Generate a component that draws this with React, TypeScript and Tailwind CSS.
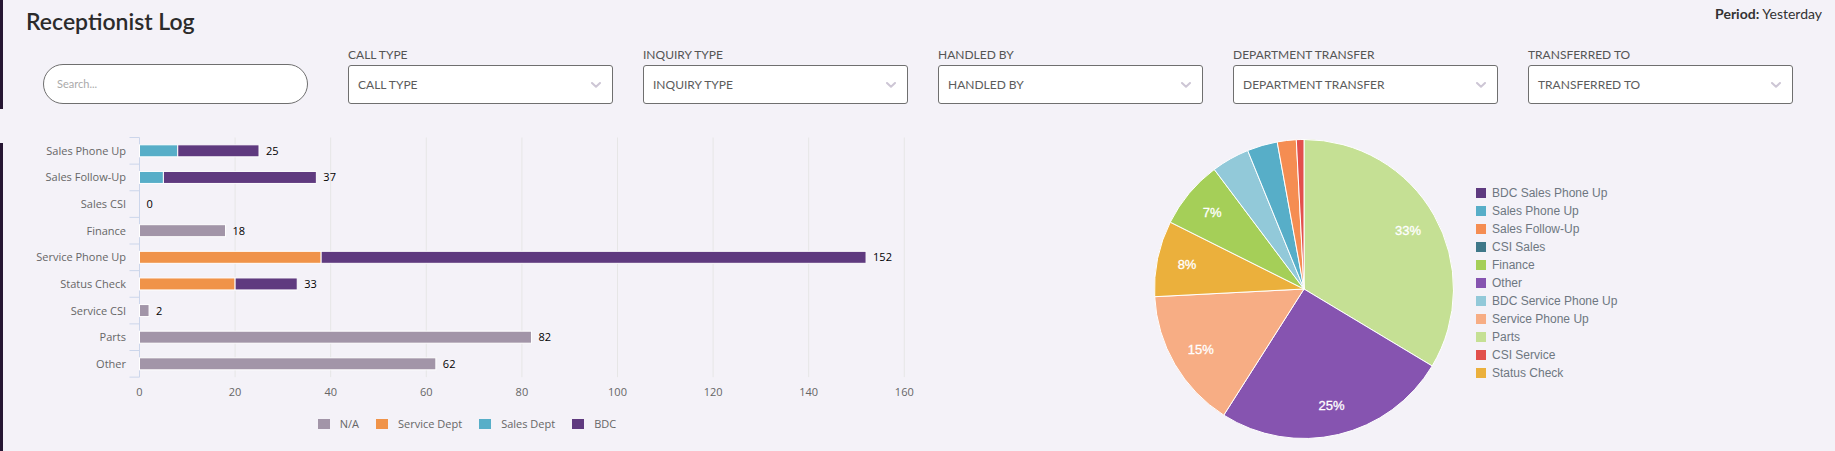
const colors = {
  na: '#a295a8',
  service: '#f09349',
  sales: '#57aec8',
  bdc: '#5f3a7f',
}

type Seg = { k: keyof typeof colors; v: number }

const rows: { label: string; segs: Seg[] }[] = [
  { label: 'Sales Phone Up', segs: [{ k: 'sales', v: 8 }, { k: 'bdc', v: 17 }] },
  { label: 'Sales Follow-Up', segs: [{ k: 'sales', v: 5 }, { k: 'bdc', v: 32 }] },
  { label: 'Sales CSI', segs: [] },
  { label: 'Finance', segs: [{ k: 'na', v: 18 }] },
  { label: 'Service Phone Up', segs: [{ k: 'service', v: 38 }, { k: 'bdc', v: 114 }] },
  { label: 'Status Check', segs: [{ k: 'service', v: 20 }, { k: 'bdc', v: 13 }] },
  { label: 'Service CSI', segs: [{ k: 'na', v: 2 }] },
  { label: 'Parts', segs: [{ k: 'na', v: 82 }] },
  { label: 'Other', segs: [{ k: 'na', v: 62 }] },
]

const slices = [
  { name: 'Parts', v: 82, color: '#c5e094', label: '33%' },
  { name: 'Other', v: 62, color: '#8654b0', label: '25%' },
  { name: 'Service Phone Up', v: 37, color: '#f7ad84', label: '15%' },
  { name: 'Status Check', v: 20, color: '#ebb03c', label: '8%' },
  { name: 'Finance', v: 18, color: '#a5cf58', label: '7%' },
  { name: 'BDC Service Phone Up', v: 10, color: '#92c9d9', label: '' },
  { name: 'Sales Phone Up', v: 8, color: '#57aec8', label: '' },
  { name: 'Sales Follow-Up', v: 5, color: '#f58d52', label: '' },
  { name: 'CSI Service', v: 2, color: '#e2504c', label: '' },
]

const pieLegend = [
  { name: 'BDC Sales Phone Up', color: '#5e3a80' },
  { name: 'Sales Phone Up', color: '#57aec8' },
  { name: 'Sales Follow-Up', color: '#f58d52' },
  { name: 'CSI Sales', color: '#3f7889' },
  { name: 'Finance', color: '#a5cf58' },
  { name: 'Other', color: '#8654b0' },
  { name: 'BDC Service Phone Up', color: '#92c9d9' },
  { name: 'Service Phone Up', color: '#f7ad84' },
  { name: 'Parts', color: '#c5e094' },
  { name: 'CSI Service', color: '#e2504c' },
  { name: 'Status Check', color: '#ebb03c' },
]

const filters = ['Call Type', 'Inquiry Type', 'Handled By', 'Department Transfer', 'Transferred To']

// bar chart geometry, page coordinates
const X0 = 139.5
const SCALE = 4.78
const TOP = 137.5
const BAND = 26.625

function BarChart() {
  return (
    <svg width={932} height={300} className="block font-['Open_Sans',sans-serif]">
      <g transform="translate(-3,-109)">
        {[1, 2, 3, 4, 5, 6, 7, 8].map((k) => (
          <line key={k} x1={X0 + k * 20 * SCALE} x2={X0 + k * 20 * SCALE} y1={TOP} y2={TOP + BAND * 9} stroke="#e6e6e6" strokeWidth={1} />
        ))}
        <line x1={X0} x2={X0} y1={TOP} y2={TOP + BAND * 9} stroke="#ccd6eb" />
        {Array.from({ length: 10 }).map((_, k) => (
          <line key={k} x1={X0 - 10} x2={X0} y1={TOP + k * BAND} y2={TOP + k * BAND} stroke="#ccd6eb" />
        ))}
        {rows.map((r, i) => {
          const cy = TOP + BAND * (i + 0.5)
          let cum = 0
          const total = r.segs.reduce((a, s) => a + s.v, 0)
          return (
            <g key={r.label}>
              <text x={126} y={cy + 4} textAnchor="end" fontSize={11} fill="#666">
                {r.label}
              </text>
              {r.segs.map((s) => {
                const x = X0 + cum * SCALE
                cum += s.v
                return <rect key={s.k} x={x} y={cy - 6} width={s.v * SCALE} height={12} fill={colors[s.k]} stroke="#fff" strokeWidth={1} />
              })}
              <text x={X0 + total * SCALE + 7} y={cy + 4} fontSize={11} fill="#000">
                {total}
              </text>
            </g>
          )
        })}
        {[0, 1, 2, 3, 4, 5, 6, 7, 8].map((k) => (
          <text key={k} x={X0 + k * 20 * SCALE} y={396} textAnchor="middle" fontSize={11} fill="#666">
            {k * 20}
          </text>
        ))}
      </g>
    </svg>
  )
}

function PieChart() {
  const total = slices.reduce((a, s) => a + s.v, 0)
  const c = 151
  const r = 149.5
  const pt = (deg: number, rad: number) => {
    const a = (deg * Math.PI) / 180
    return [c + rad * Math.sin(a), c - rad * Math.cos(a)]
  }
  let acc = 0
  return (
    <svg width={302} height={302} className="block shrink-0">
      {slices.map((s) => {
        const a0 = (acc / total) * 360
        acc += s.v
        const a1 = (acc / total) * 360
        const [x0, y0] = pt(a0, r)
        const [x1, y1] = pt(a1, r)
        const large = a1 - a0 > 180 ? 1 : 0
        const [lx, ly] = pt((a0 + a1) / 2, r - 30)
        return (
          <g key={s.name}>
            <path d={`M${c} ${c} L${x0} ${y0} A${r} ${r} 0 ${large} 1 ${x1} ${y1} Z`} fill={s.color} stroke="#fff" strokeWidth={1} />
            {s.label && (
              <text x={lx} y={ly + 4.5} textAnchor="middle" fontSize={13} fill="#fff" stroke="#fff" strokeWidth={0.3} className="font-['Liberation_Sans',Arial,sans-serif]">
                {s.label}
              </text>
            )}
          </g>
        )
      })}
    </svg>
  )
}

function Chevron() {
  return (
    <svg width={10} height={6} viewBox="0 0 10 6" className="shrink-0">
      <path d="M1 1 L5 4.8 L9 1" fill="none" stroke="#cdc6d5" strokeWidth={2} strokeLinecap="round" strokeLinejoin="round" />
    </svg>
  )
}

export default function App() {
  return (
    <div className="min-h-screen flex flex-col bg-[#f4f2f8] font-[Lato,sans-serif]">
      <div className="h-[109px] border-l-[3px] border-[#261633] pl-[23px] pr-[13px]">
        <div className="flex justify-between items-start">
          <h1 className="pt-[6px] text-[23px] leading-[30px] font-semibold text-[#2b2b2b]">Receptionist Log</h1>
          <div className="pt-[5px] text-[14px] leading-[17px] text-[#333]">
            <span className="font-bold">Period:</span> Yesterday
          </div>
        </div>
        <div className="mt-[12px] ml-[17px] flex items-end gap-[30px]">
          <div className="w-[265px] h-[40px] mr-[10px] rounded-full border border-[#6f6f6f] bg-white flex items-center px-[13px]">
            <span className="text-[11px] text-[#aaa]">Search...</span>
          </div>
          {filters.map((f) => (
            <div key={f} className="w-[265px]">
              <div className="text-[12px] leading-[14px] uppercase text-[#555] mb-[3px]">{f}</div>
              <div className="h-[39px] rounded-[3px] border border-[#6f6f6f] bg-white flex items-center justify-between pl-[9px] pr-[11px]">
                <span className="text-[12px] uppercase text-[#5c5c5c]">{f}</span>
                <Chevron />
              </div>
            </div>
          ))}
        </div>
      </div>
      <div className="flex-1 flex">
        <div className="w-[3px] mt-[34px] bg-[#261633]" />
        <div className="w-[932px] shrink-0">
          <BarChart />
          <div className="mt-[8px] flex justify-center gap-[17px] pr-[4px] font-['Open_Sans',sans-serif] text-[11px] leading-[14px] text-[#666]">
            {[
              ['N/A', colors.na],
              ['Service Dept', colors.service],
              ['Sales Dept', colors.sales],
              ['BDC', colors.bdc],
            ].map(([n, col]) => (
              <div key={n} className="flex items-center">
                <span className="w-[12px] h-[10px] mr-[10px]" style={{ background: col }} />
                {n}
              </div>
            ))}
          </div>
        </div>
        <div className="ml-[218px] mt-[29px]">
          <PieChart />
        </div>
        <div className="ml-[21px] mt-[75px] font-['Liberation_Sans',Arial,sans-serif] text-[12px] leading-[18px] text-[#6e7781]">
          {pieLegend.map((l) => (
            <div key={l.name} className="flex items-center">
              <span className="w-[10px] h-[10px] mr-[6px]" style={{ background: l.color }} />
              {l.name}
            </div>
          ))}
        </div>
      </div>
    </div>
  )
}
